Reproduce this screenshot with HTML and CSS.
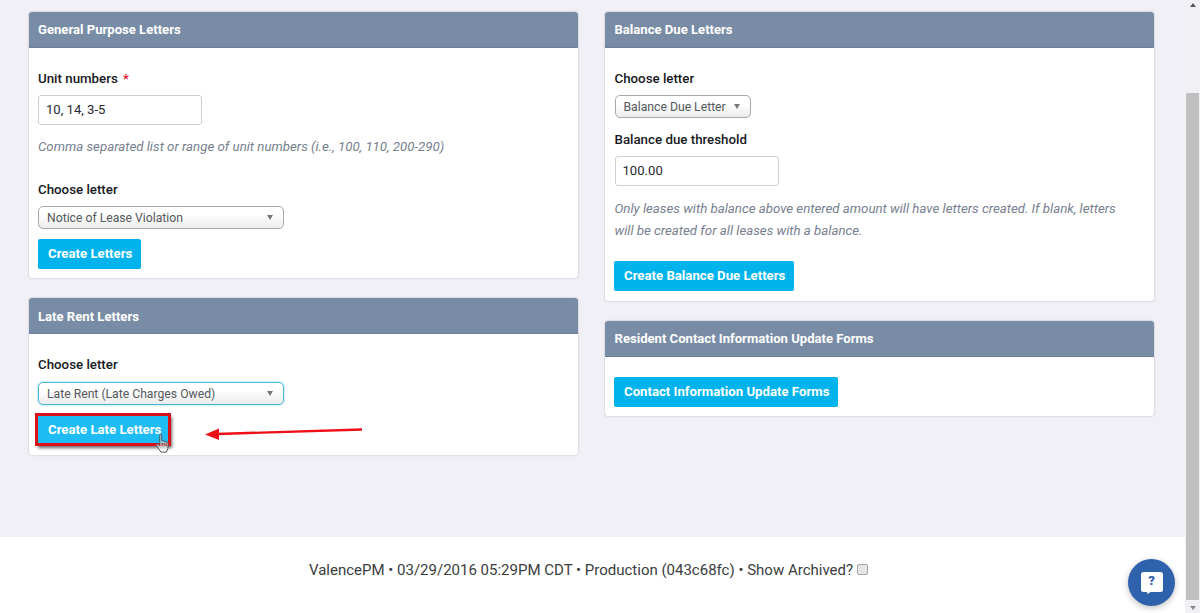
FILE: index.html
```html
<!DOCTYPE html>
<html lang="en">
<head>
<meta charset="utf-8">
<title>Letters</title>
<link rel="stylesheet" href="styles.css">
</head>
<body>
<div class="page">
  <main class="main">
    <div class="content">
      <div class="column">
        <section class="card card-general">
          <h2 class="card-head">General Purpose Letters</h2>
          <div class="card-body">
            <div class="label">Unit numbers <span class="req">*</span></div>
            <div class="input">10, 14, 3-5</div>
            <p class="hint hint-unit">Comma separated list or range of unit numbers (i.e., 100, 110, 200-290)</p>
            <div class="label">Choose letter</div>
            <div class="select select-wide"><span>Notice of Lease Violation</span><i class="caret"></i></div>
            <div class="btn btn-general">Create Letters</div>
          </div>
        </section>
        <section class="card card-late">
          <h2 class="card-head card-head-low">Late Rent Letters</h2>
          <div class="card-body">
            <div class="label">Choose letter</div>
            <div class="select select-wide select-focus"><span>Late Rent (Late Charges Owed)</span><i class="caret"></i></div>
            <div class="annotated">
              <div class="btn btn-marked">Create Late Letters</div>
              <svg class="cursor" width="15" height="20" viewBox="0 0 15 20" aria-hidden="true">
                <path d="M5 1.500c.7-.7 1.700-.3 1.700.7v5.500l1 .1 4.300 1.400c.9.3 1.500 1 1.400 1.900l-.6 4.500-1.400 3.500H6L1.300 12.400c-.5-.8.400-1.800 1.300-1.300l2.200 1.500V2.200z" fill="rgba(255,255,255,.55)" stroke="#555" stroke-width="1"/>
                <path d="M7.300 9.500v3M9.300 9.800v3M11.300 10.200v3" stroke="#555" stroke-width=".9" fill="none"/>
              </svg>
              <svg class="arrow" width="158" height="16" viewBox="0 0 158 16" aria-hidden="true">
                <path d="M157 3.500 L12 8" stroke="#ee1018" stroke-width="2.400" fill="none"/>
                <path d="M0 8.500 L14 2.500 L14 14 Z" fill="#ee1018"/>
              </svg>
            </div>
          </div>
        </section>
      </div>
      <div class="column">
        <section class="card card-balance">
          <h2 class="card-head">Balance Due Letters</h2>
          <div class="card-body">
            <div class="label">Choose letter</div>
            <div class="select select-narrow"><span>Balance Due Letter</span><i class="caret"></i></div>
            <div class="label label-threshold">Balance due threshold</div>
            <div class="input">100.00</div>
            <p class="hint hint-balance">Only leases with balance above entered amount will have letters created. If blank, letters will be created for all leases with a balance.</p>
            <div class="btn btn-right">Create Balance Due Letters</div>
          </div>
        </section>
        <section class="card card-contact">
          <h2 class="card-head">Resident Contact Information Update Forms</h2>
          <div class="card-body">
            <div class="btn btn-right">Contact Information Update Forms</div>
          </div>
        </section>
      </div>
    </div>
    <footer class="footer">
      <span>ValencePM • 03/29/2016 05:29PM CDT • Production (043c68fc) • Show Archived?</span>
      <i class="checkbox"></i>
    </footer>
    <div class="help">
      <svg width="22" height="22" viewBox="0 0 22 22" aria-hidden="true">
        <path d="M2.500 0h17A2.500 2.500 0 0 1 22 2.500v15a2.500 2.500 0 0 1-2.500 2.500H9.500L6.500 22 6 20H2.500A2.500 2.500 0 0 1 0 17.500v-15A2.500 2.500 0 0 1 2.500 0z" fill="#fff"/>
      </svg>
      <span class="help-mark">?</span>
    </div>
  </main>
  <aside class="scrollbar">
    <i class="scroll-up"></i>
    <div class="scroll-track"><div class="scroll-thumb"></div></div>
    <i class="scroll-down"></i>
  </aside>
</div>
</body>
</html>
```

FILE: styles.css
```css
* { box-sizing: border-box; }
html, body { margin: 0; height: 100%; overflow: hidden; }
body { font-family: Roboto, "Liberation Sans", sans-serif; color: #15181c; background: #f0f0f6; }

.page { display: flex; width: 1200px; height: 613px; }
.main { position: relative; flex: 1; display: flex; flex-direction: column; min-width: 0; }
.content { flex: 1; display: flex; gap: 27.500px; padding: 12px 0 0 28.500px; }
.column { width: 549px; display: flex; flex-direction: column; gap: 20px; }

.card { background: #fff; border-radius: 3px; box-shadow: 0 0 2px rgba(90, 100, 120, .45); }
.card-general { height: 266px; }
.card-late { height: 157px; }
.card-balance { height: 289px; }
.card-contact { height: 95px; }

.card-head { margin: 0; height: 36px; padding: 0 9.500px; background: #798ca6; color: #fff; font-size: 13.100px; font-weight: 700; line-height: 35px; border-radius: 3px 3px 0 0; border-bottom: 1px solid #6d7f9c; }
.card-head-low { line-height: 37px; }
.card-body { padding: 20px 9.500px 0; }

.label { font-size: 13.300px; font-weight: 500; line-height: 22px; height: 20px; color: #17191d; }
.req { color: #e8182c; margin-left: 2px; }
.label-threshold { margin-top: 11px; }

.input { width: 164px; height: 30px; margin-top: 7px; padding: 0 7px; border: 1px solid #cfd0d4; border-radius: 3px; background: #fff; font-size: 13.100px; line-height: 28px; color: #26292d; }

.hint { margin: 0; font-size: 13.250px; font-style: italic; color: #76808e; line-height: 22px; }
.hint-unit { margin-top: 11px; margin-bottom: 21px; }
.hint-balance { margin-top: 12px; margin-bottom: 19px; width: 512px; }

.select { display: flex; align-items: center; justify-content: space-between; height: 23px; margin-top: 7px; padding: 0 10px 0 8px; border: 1px solid #a8a8a8; border-radius: 5px; background: linear-gradient(#fff, #fff 35%, #ececec); font-size: 12.200px; color: #55585c; }
.select-wide { width: 246px; }
.select-narrow { width: 136px; }
.select-focus { margin-top: 8px; border-color: #4db5d8; box-shadow: 0 0 2px #5cc4e6; }
.caret { width: 0; height: 0; border-left: 3px solid transparent; border-right: 3px solid transparent; border-top: 5px solid #777; }

.btn { display: inline-block; height: 30px; padding: 0 10px; background: #00b3ec; border-radius: 2px; color: #fff; font-size: 13.200px; font-weight: 700; line-height: 30px; white-space: nowrap; }
.btn-general { margin-top: 10px; padding-right: 9px; }
.btn-right { margin-left: -.5px; padding-right: 9px; }

.annotated { position: relative; margin-top: 11px; }
.btn-marked { display: block; width: 130px; height: 27px; line-height: 27px; background: #1dbcf5; box-shadow: 0 0 0 3px #df1118, 2px 3px 3px 2px rgba(40, 40, 40, .7); border-radius: 0; }
.cursor { position: absolute; left: 117px; top: 17px; }
.arrow { position: absolute; left: 167px; top: 9.500px; }

.footer { height: 76px; background: #fff; display: flex; justify-content: center; align-items: center; gap: 4px; font-size: 15px; color: #3b3d40; padding: 0 8px 11px 0; }
.checkbox { width: 11px; height: 11px; border: 1px solid #a5a5a5; border-radius: 2px; background: #e6e6e6; }

.help { position: absolute; left: 1128px; top: 559px; width: 47px; height: 47px; border-radius: 50%; background: #2f62ac; display: flex; align-items: center; justify-content: center; box-shadow: 0 2px 6px rgba(0, 0, 0, .25); }
.help svg { display: block; margin-top: 1px; }
.help-mark { position: absolute; left: 0; right: 0; top: 13px; text-align: center; color: #2f62ac; font-size: 13px; font-weight: 900; line-height: 18px; }

.scrollbar { width: 15px; background: #f1f1f5; display: flex; flex-direction: column; }
.scroll-up, .scroll-down { display: block; width: 0; height: 0; margin: 0 auto; border-left: 3px solid transparent; border-right: 3px solid transparent; }
.scroll-up { margin-top: 3px; border-bottom: 4px solid #555; }
.scroll-track { flex: 1; padding: 86px 1px 0 1px; }
.scroll-thumb { height: 507px; background: #c0c0c0; }
.scroll-down { margin-bottom: 3px; border-top: 4px solid #888; }
```
